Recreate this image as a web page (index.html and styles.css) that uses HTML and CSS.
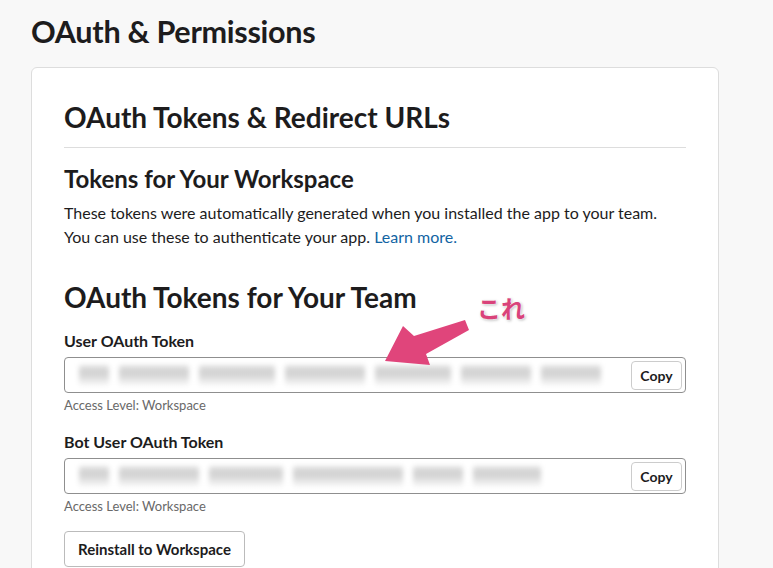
FILE: index.html
```html
<!DOCTYPE html>
<html lang="en">
<head>
<meta charset="utf-8">
<title>OAuth &amp; Permissions</title>
<link rel="stylesheet" href="styles.css">
</head>
<body>
<div class="page">
  <h1 class="page-title">OAuth &amp; Permissions</h1>
  <section class="card">
    <h2 class="card-title">OAuth Tokens &amp; Redirect URLs</h2>
    <hr class="divider">
    <h3 class="sub-title">Tokens for Your Workspace</h3>
    <p class="desc">These tokens were automatically generated when you installed the app to your team.<br>You can use these to authenticate your app. <a class="link" href="#">Learn more.</a></p>
    <h2 class="team-title">OAuth Tokens for Your Team</h2>

    <div class="field">
      <div class="label">User OAuth Token</div>
      <div class="token-box">
        <div class="token-blur">
          <span class="b" style="width:30px"></span>
          <span class="b" style="width:70px"></span>
          <span class="b" style="width:76px"></span>
          <span class="b" style="width:80px"></span>
          <span class="b" style="width:76px"></span>
          <span class="b" style="width:70px"></span>
          <span class="b" style="width:60px"></span>
        </div>
        <button class="copy">Copy</button>
      </div>
      <div class="level">Access Level: Workspace</div>
    </div>

    <div class="field">
      <div class="label">Bot User OAuth Token</div>
      <div class="token-box">
        <div class="token-blur short">
          <span class="b" style="width:30px"></span>
          <span class="b" style="width:80px"></span>
          <span class="b" style="width:74px"></span>
          <span class="b" style="width:110px"></span>
          <span class="b" style="width:50px"></span>
          <span class="b" style="width:68px"></span>
        </div>
        <button class="copy">Copy</button>
      </div>
      <div class="level">Access Level: Workspace</div>
    </div>

    <button class="reinstall">Reinstall to Workspace</button>
  </section>

  <div class="note">これ</div>
  <svg class="arrow" width="100" height="50" viewBox="380 318 100 50">
    <polygon points="385,361 403,326 414,336 465,320 469,330 426,354 430,365" fill="#e0457b"/>
  </svg>
</div>
</body>
</html>
```

FILE: styles.css
```css
* { box-sizing: border-box; }
html, body { margin: 0; padding: 0; }
body {
  background: #f8f8f8;
  font-family: Lato, "Noto Sans", sans-serif;
  color: #1d1c1d;
  width: 773px;
  height: 568px;
  overflow: hidden;
}
.page {
  position: relative;
  height: 568px;
  overflow: hidden;
  padding: 14px 54px 0 31px;
}
.page-title {
  font-size: 30.6px;
  font-weight: 700;
  margin: 0 0 17px 0;
  line-height: 36px;
  letter-spacing: -0.3px;
}
.card {
  background: #fff;
  border: 1px solid #dddddd;
  border-radius: 6px;
  padding: 32px 32px 40px;
  width: 688px;
}
.card-title {
  font-size: 28px;
  font-weight: 700;
  margin: 0;
  line-height: 34px;
}
.divider {
  border: 0;
  border-top: 1px solid #dddddd;
  margin: 13px 0 16px;
}
.sub-title {
  font-size: 24px;
  font-weight: 700;
  margin: 0;
  line-height: 30px;
}
.desc {
  font-size: 16px;
  line-height: 24px;
  margin: 7px 0 0;
  color: #1d1c1d;
}
.link { color: #1264a3; text-decoration: none; }
.team-title {
  font-size: 28px;
  font-weight: 700;
  margin: 31px 0 0;
  line-height: 34px;
}
.field { margin-top: 16px; }
.field + .field { margin-top: 18px; }
.label {
  font-size: 16px;
  font-weight: 700;
  line-height: 22px;
  margin-bottom: 5px;
}
.token-box {
  height: 36px;
  border: 1px solid #8f8f8f;
  border-radius: 4px;
  display: flex;
  align-items: center;
  padding: 0 3px 0 14px;
  overflow: hidden;
}
.token-blur {
  flex: 1;
  min-width: 0;
  overflow: hidden;
  display: flex;
  gap: 10px;
  filter: blur(2.5px);
  padding-right: 6px;
}
.token-blur.short { padding-right: 70px; }
.b {
  display: block;
  flex-shrink: 0;
  height: 20px;
  background: linear-gradient(#e6e6e6 0, #d2d2d2 30%, #d6d6d6 55%, #ececec 80%, #f2f2f2 100%);
  border-radius: 2px;
}
.copy {
  flex-shrink: 0;
  font-family: Lato, "Noto Sans", sans-serif;
  font-size: 14px;
  font-weight: 700;
  color: #1d1c1d;
  background: #fff;
  border: 1px solid #cccccc;
  border-radius: 4px;
  height: 29px;
  width: 51px;
  padding: 0;
}
.level {
  font-size: 13px;
  color: #696969;
  line-height: 16px;
  margin-top: 4px;
}
.reinstall {
  margin-top: 17px;
  font-family: Lato, "Noto Sans", sans-serif;
  font-size: 15px;
  font-weight: 700;
  color: #1d1c1d;
  background: #fff;
  border: 1px solid #bbbbbb;
  border-radius: 4px;
  height: 36px;
  padding: 0 13px;
}
.note {
  position: absolute;
  left: 477px;
  top: 292px;
  font-family: "Noto Sans CJK JP", sans-serif;
  font-weight: 700;
  font-size: 24px;
  line-height: 32px;
  color: #d9437a;
  text-shadow: 0 0 2px #fff, 0 0 2px #fff, 1px 1px 3px rgba(0,0,0,0.35);
}
.arrow {
  position: absolute;
  left: 380px;
  top: 318px;
}
```
